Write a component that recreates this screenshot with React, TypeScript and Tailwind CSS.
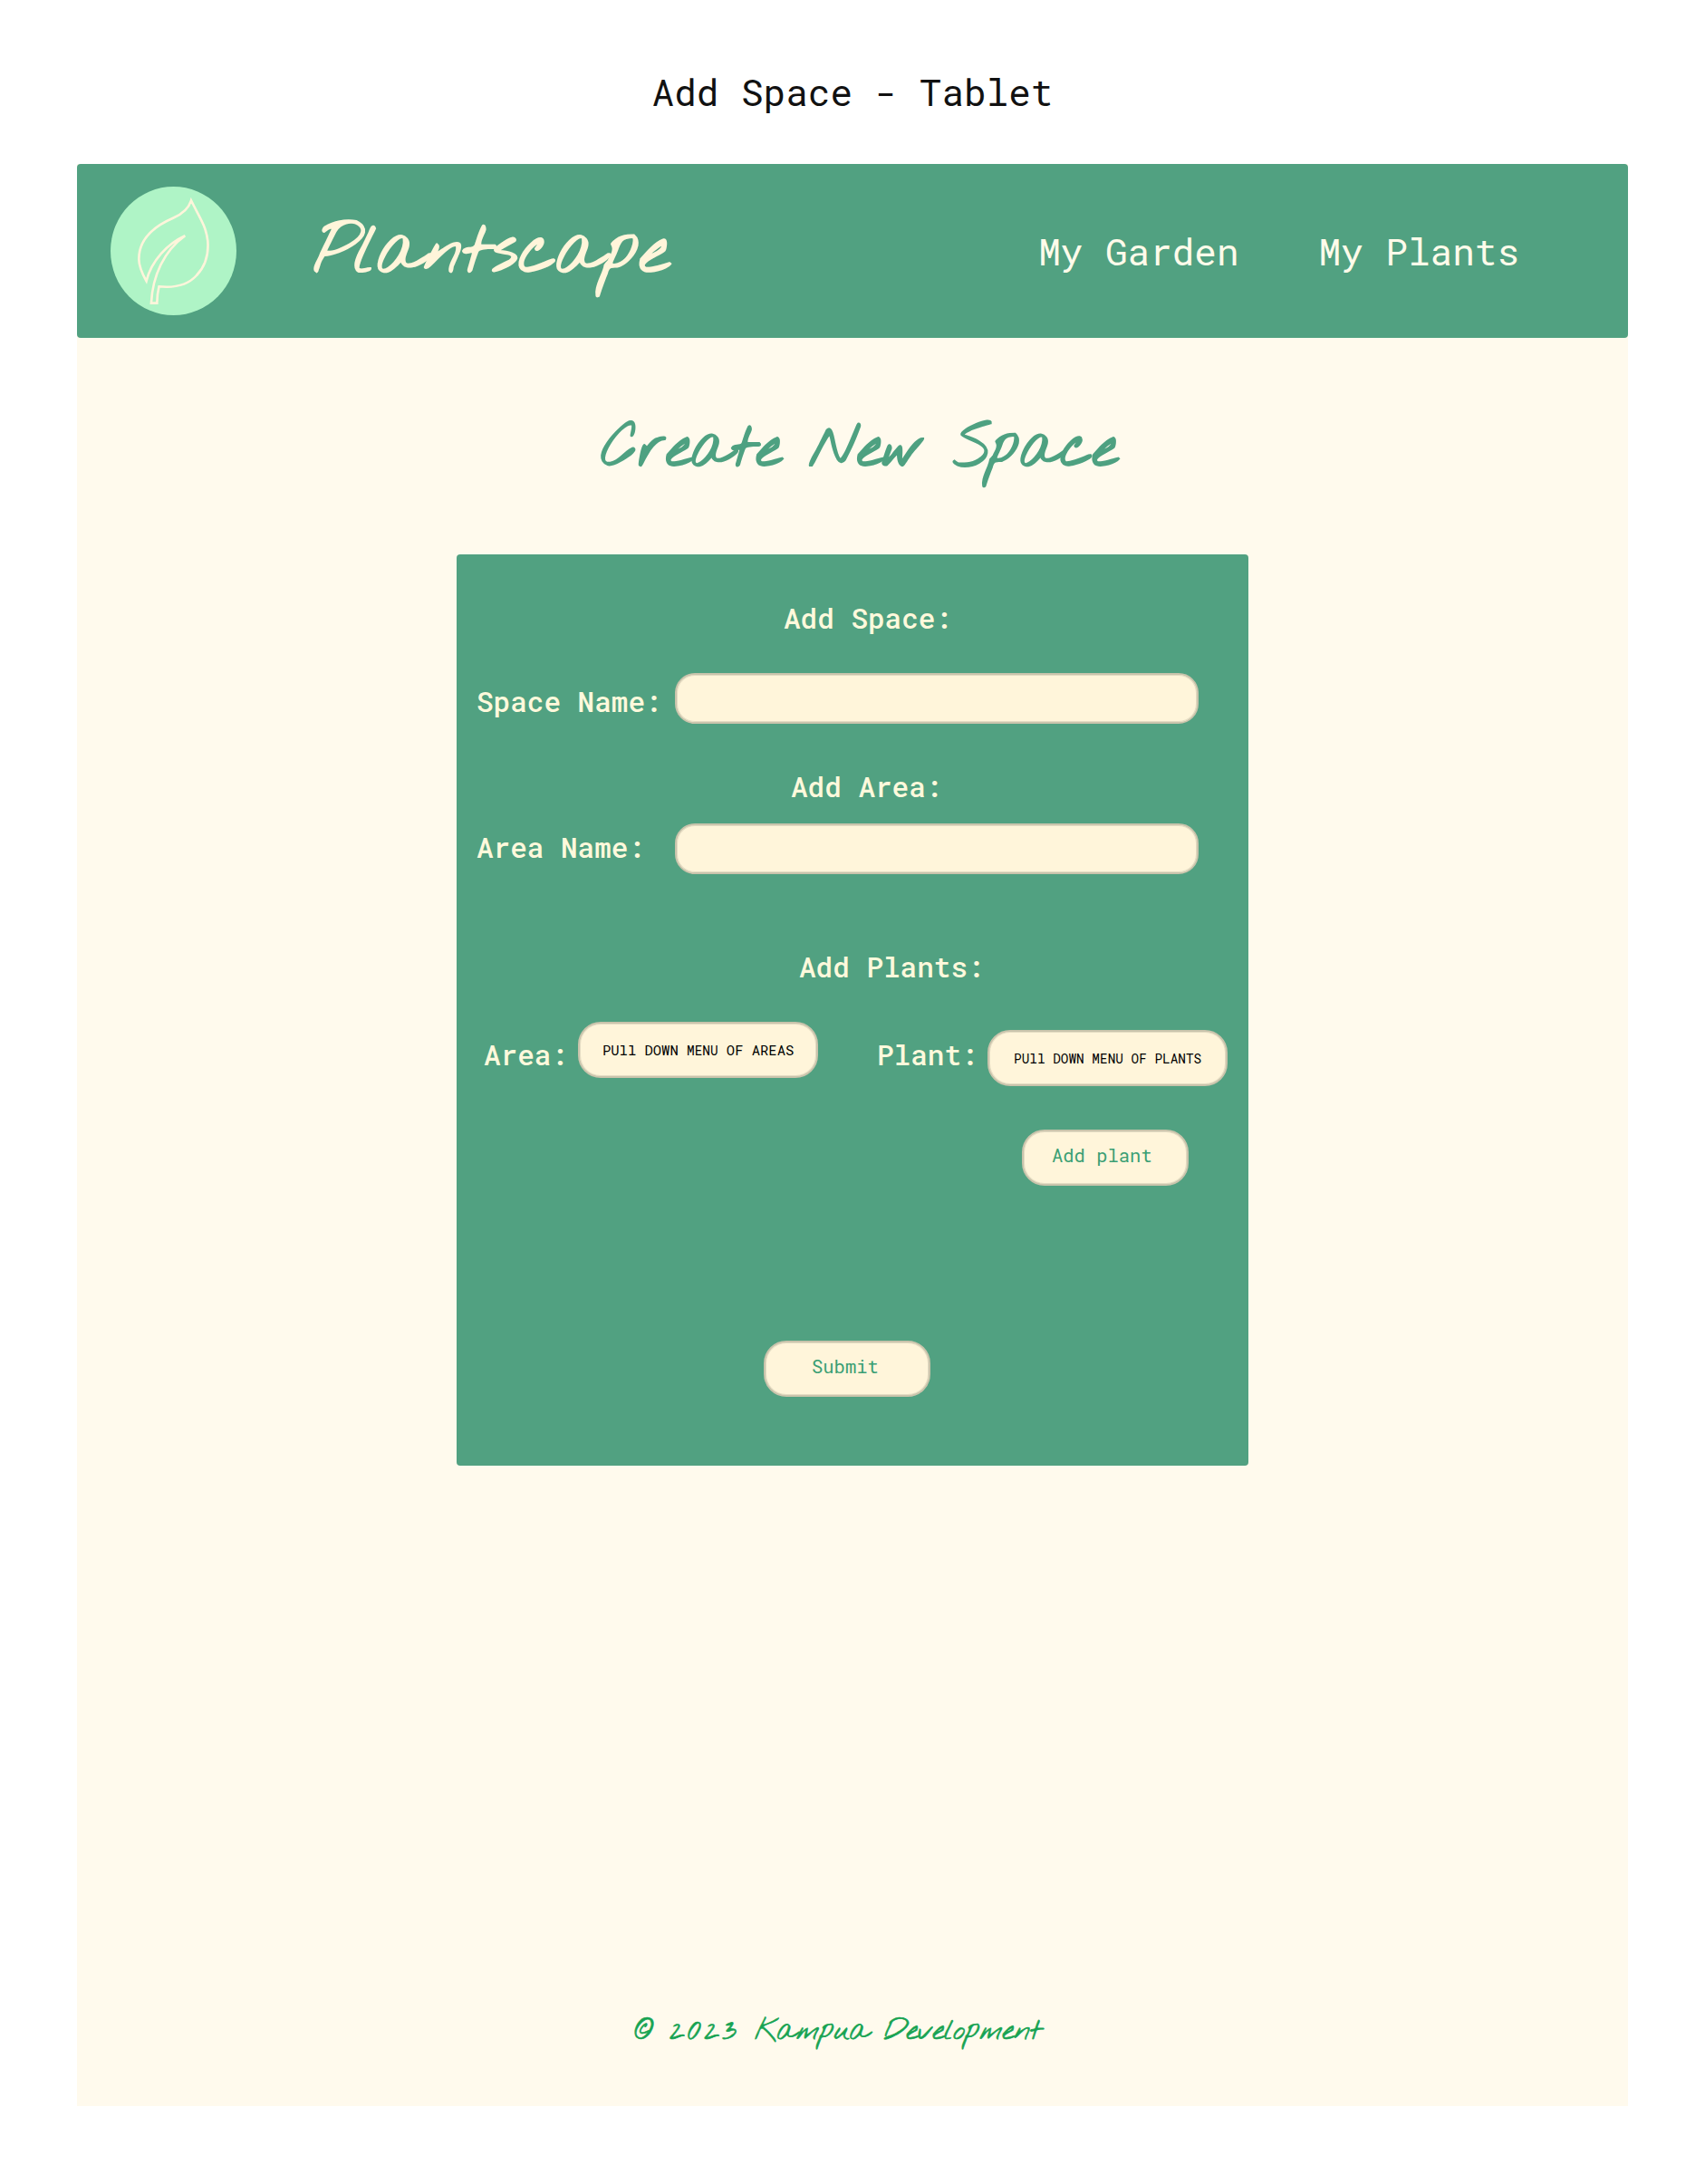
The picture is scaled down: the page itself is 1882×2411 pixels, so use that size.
import type { ReactNode } from 'react';

function Leaf() {
  return (
    <svg viewBox="0 0 139 142" className="h-[142px] w-[139px]" fill="none">
      <ellipse cx="69.5" cy="71" rx="69.5" ry="71" fill="#aff4c6" />
      <path
        d="M89 15.3C86 25 78.500 30.500 69 34.800C50 43 31.300 56 31.300 80C31.300 89 35.500 97 39.600 104.300C45 82 63 63 82.300 54.300C59 71 46.500 98 44.900 128.600H51.300C51.300 122 52 116.500 53.500 110.300C70 112 85 109 95 98C105 87.500 108.500 75 107.300 60C105.500 43 97 32 89 15.300Z"
        stroke="#fff5db"
        strokeWidth="2.6"
      />
    </svg>
  );
}

function Label({ children, className }: { children: ReactNode; className: string }) {
  return <div className={`text-[31px] leading-[40px] font-medium whitespace-nowrap text-[#fff9dc] ${className}`}>{children}</div>;
}

function Pill({ children, className }: { children?: ReactNode; className: string }) {
  return <div className={`flex items-center border-2 border-[#cac4ac] bg-[#fff5da] whitespace-pre outline-[1px] -outline-offset-[3px] outline-[#cac4ac]/50 ${className}`}>{children}</div>;
}

export default function App() {
  return (
    <div className="h-[2411px] w-[1882px] bg-white font-['Roboto_Mono',monospace]">
      <h1 className="pt-[71px] text-center text-[41px] leading-[60px] text-[#111111]">Add Space - Tablet</h1>
      <div className="mt-[50px] ml-[85px] h-[2144px] w-[1712px] bg-[#fffaed]">
        <header className="flex h-48 items-start rounded-[4px] bg-[#51a181]">
          <div className="mt-[25px] ml-[37px]"><Leaf /></div>
          <div className="mt-[49px] ml-[85px] font-['Nothing_You_Could_Do',cursive] text-[76px] leading-[100px] text-[#fff5da] [-webkit-text-stroke:2.2px_#fff5da]">Plantscape</div>
          <nav className="mt-[66px] mr-[120px] ml-auto flex gap-[88px] text-[41px] leading-[60px] text-[#fffbea]">
            <span>My Garden</span>
            <span>My Plants</span>
          </nav>
        </header>
        <h2 className="mt-[74px] mb-[65px] pl-[15px] text-center font-['Nothing_You_Could_Do',cursive] text-[65px] leading-[100px] [word-spacing:-3px] text-[#4ea181] [-webkit-text-stroke:2.2px_#4ea181]">Create New Space</h2>
        <form className="ml-[419px] h-[1006px] w-[874px] rounded-[4px] bg-[#51a181] pt-[50px]">
          <Label className="ml-[361px]">Add Space:</Label>
          <div className="mt-[41px] flex items-start pl-[22px]">
            <Label className="mt-[11px] w-[219px]">Space Name:</Label>
            <Pill className="h-[56px] w-[578px] rounded-[22px]" />
          </div>
          <Label className="mt-[49px] ml-[369px]">Add Area:</Label>
          <div className="mt-[21px] flex items-start pl-[22px]">
            <Label className="mt-[6px] w-[219px]">Area Name:</Label>
            <Pill className="h-[56px] w-[578px] rounded-[22px]" />
          </div>
          <Label className="mt-[82px] ml-[378px]">Add Plants:</Label>
          <div className="mt-[41px] flex h-[72px] items-start pl-[30px]">
            <Label className="mt-[16px] w-[104px]">Area:</Label>
            <Pill className="h-[62px] w-[265px] rounded-[25px] pt-px pl-[25px] text-[15.5px] text-black">
              <span>PUll DOWN <span className="text-[14.4px]">MENU</span> OF AREAS</span>
            </Pill>
            <Label className="mt-[16px] ml-[65px] w-[122px]">Plant:</Label>
            <Pill className="mt-[9px] h-[62px] w-[265px] rounded-[25px] pt-px pl-[27px] text-[14.4px] text-black">PUll DOWN MENU OF PLANTS</Pill>
          </div>
          <Pill className="mt-[47px] ml-[624px] h-[62px] w-[184px] rounded-[25px] pb-[4px] pl-[31px] text-[20.5px] text-[#3a9f74]">Add plant</Pill>
          <Pill className="mt-[171px] ml-[339px] h-[62px] w-[184px] rounded-[25px] pb-[4px] pl-[51px] text-[20.5px] text-[#3a9f74]">Submit</Pill>
        </form>
        <footer className="mt-[600px] pr-[32px] text-center font-['Nothing_You_Could_Do',cursive] text-[32px] leading-[50px] text-[#16a352] [-webkit-text-stroke:0.7px_#16a352]">
          © <span className="tracking-[3px]">2023</span> <span className="tracking-[-0.6px]">Kampua Development</span>
        </footer>
      </div>
    </div>
  );
}
